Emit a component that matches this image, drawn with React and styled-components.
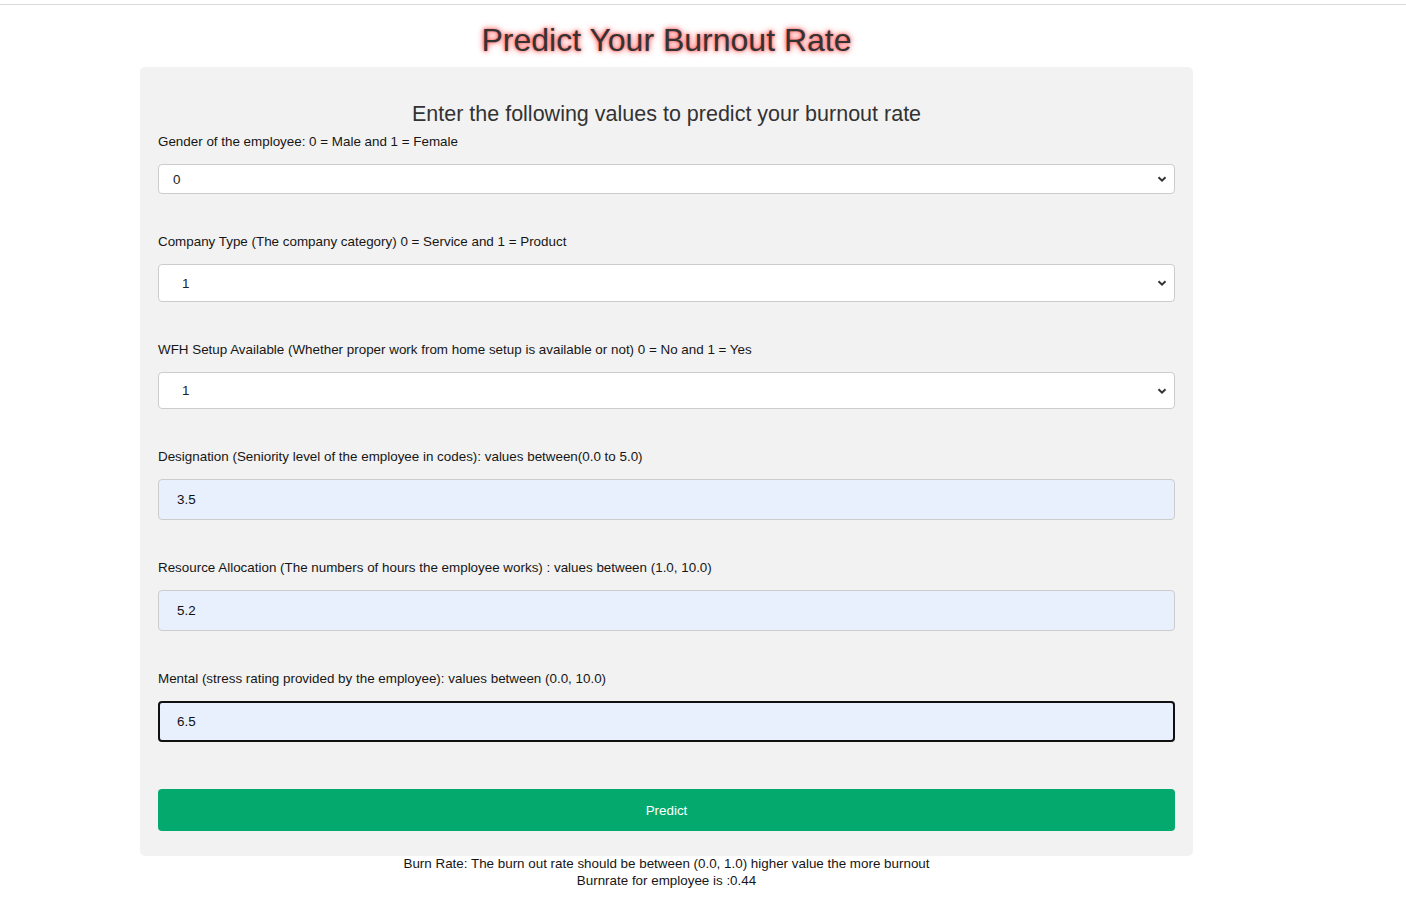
import React, { useState } from 'react'
import styled, { createGlobalStyle } from 'styled-components'

/***** Global *****/
const GlobalStyle = createGlobalStyle`
	html, body {
		margin:0;
		padding:0;
		background:#fff;
		font-family:"Liberation Sans", Arial, sans-serif;
		color:#222;
	}
`

/***** Component style *****/
const TopRule = styled.div`
	height:1px;
	margin-top:4px;
	background-color:#dadada;
`
const Page = styled.div`
	width:1053px;
	margin-left:140px;
	padding-bottom:20px;
`
const Title = styled.h1`
	margin:12px 0 0 0;
	height:50px;
	font-size:32px;
	font-weight:normal;
	line-height:46px;
	text-align:center;
	color:#333;
	text-shadow:0 0 6px #ff3b3b, 0 0 3px #ff6b6b;
`
const Card = styled.form`
	background-color:#f2f2f2;
	border-radius:5px;
	padding:34px 18px 25px 18px;
	display:flex;
	flex-direction:column;
`
const Subtitle = styled.h2`
	margin:0 0 7px 0;
	font-size:21.5px;
	font-weight:normal;
	line-height:26px;
	text-align:center;
	color:#333;
`
const Field = styled.div`
	display:flex;
	flex-direction:column;
	margin-bottom:${props => props.last ? '47px' : '40px'};
`
const Label = styled.label`
	font-size:13.4px;
	line-height:16px;
	color:#161616;
	margin-bottom:14px;
`
const SelectWrap = styled.div`
	position:relative;
	& svg {
		position:absolute;
		right:7px;
		top:50%;
		transform:translateY(-50%);
		pointer-events:none;
	}
`
const Select = styled.select`
	appearance:none;
	-webkit-appearance:none;
	width:100%;
	box-sizing:border-box;
	height:${props => props.h || '38px'};
	padding:0 0 0 ${props => props.pad || '23px'};
	background-color:#fff;
	border:1px solid #ccc;
	border-radius:4px;
	font-family:"Liberation Sans", Arial, sans-serif;
	font-size:13.4px;
	color:#222;
	outline:none;
`
const Input = styled.input`
	width:100%;
	box-sizing:border-box;
	height:41px;
	padding:0 0 0 ${props => props.active ? '17px' : '18px'};
	background-color:#e8f0fe;
	border:${props => props.active ? '2px solid #111' : '1px solid #ccc'};
	border-radius:4px;
	font-family:"Liberation Sans", Arial, sans-serif;
	font-size:13.4px;
	color:#111;
	outline:none;
`
const PredictButton = styled.button`
	height:42px;
	width:100%;
	border:none;
	border-radius:4px;
	background-color:#04aa6d;
	color:#fff;
	font-family:"Liberation Sans", Arial, sans-serif;
	font-size:13.4px;
	cursor:pointer;
`
const Result = styled.div`
	text-align:center;
	font-size:13.4px;
	line-height:17px;
	color:#161616;
	margin-top:-1px;
`
/****** ******************** *****/

const Chevron = () => (
	<svg width="12" height="12" viewBox="0 0 12 12">
		<path d="M2.5 4.2 L6 7.7 L9.5 4.2" fill="none" stroke="#333" strokeWidth="2" />
	</svg>
)

const fields = [
	{ label: 'Gender of the employee: 0 = Male and 1 = Female', type: 'select', value: '0', h: '30px', pad: '14px' },
	{ label: 'Company Type (The company category) 0 = Service and 1 = Product', type: 'select', value: '1' },
	{ label: 'WFH Setup Available (Whether proper work from home setup is available or not) 0 = No and 1 = Yes', type: 'select', value: '1', h: '37px' },
	{ label: 'Designation (Seniority level of the employee in codes): values between(0.0 to 5.0)', type: 'input', value: '3.5' },
	{ label: 'Resource Allocation (The numbers of hours the employee works) : values between (1.0, 10.0)', type: 'input', value: '5.2' },
	{ label: 'Mental (stress rating provided by the employee): values between (0.0, 10.0)', type: 'input', value: '6.5', active: true },
]

const App = () => {

	const [values, setValues] = useState(fields.map(f => f.value))

	const handleChange = (i) => (e) => {
		const next = [...values]
		next[i] = e.target.value
		setValues(next)
	}

	return (
		<>
			<GlobalStyle />
			<TopRule />
			<Page>
				<Title>Predict Your Burnout Rate</Title>
				<Card onSubmit={e => e.preventDefault()}>
					<Subtitle>Enter the following values to predict your burnout rate</Subtitle>
					{fields.map((f, i) => (
						<Field key={i} last={i === fields.length - 1}>
							<Label>{f.label}</Label>
							{f.type === 'select' ? (
								<SelectWrap>
									<Select h={f.h} pad={f.pad} value={values[i]} onChange={handleChange(i)}>
										<option value="0">0</option>
										<option value="1">1</option>
									</Select>
									<Chevron />
								</SelectWrap>
							) : (
								<Input active={f.active} value={values[i]} onChange={handleChange(i)} />
							)}
						</Field>
					))}
					<PredictButton type="submit">Predict</PredictButton>
				</Card>
				<Result>
					Burn Rate: The burn out rate should be between (0.0, 1.0) higher value the more burnout<br />
					Burnrate for employee is :0.44
				</Result>
			</Page>
		</>
	)
}

export default App
